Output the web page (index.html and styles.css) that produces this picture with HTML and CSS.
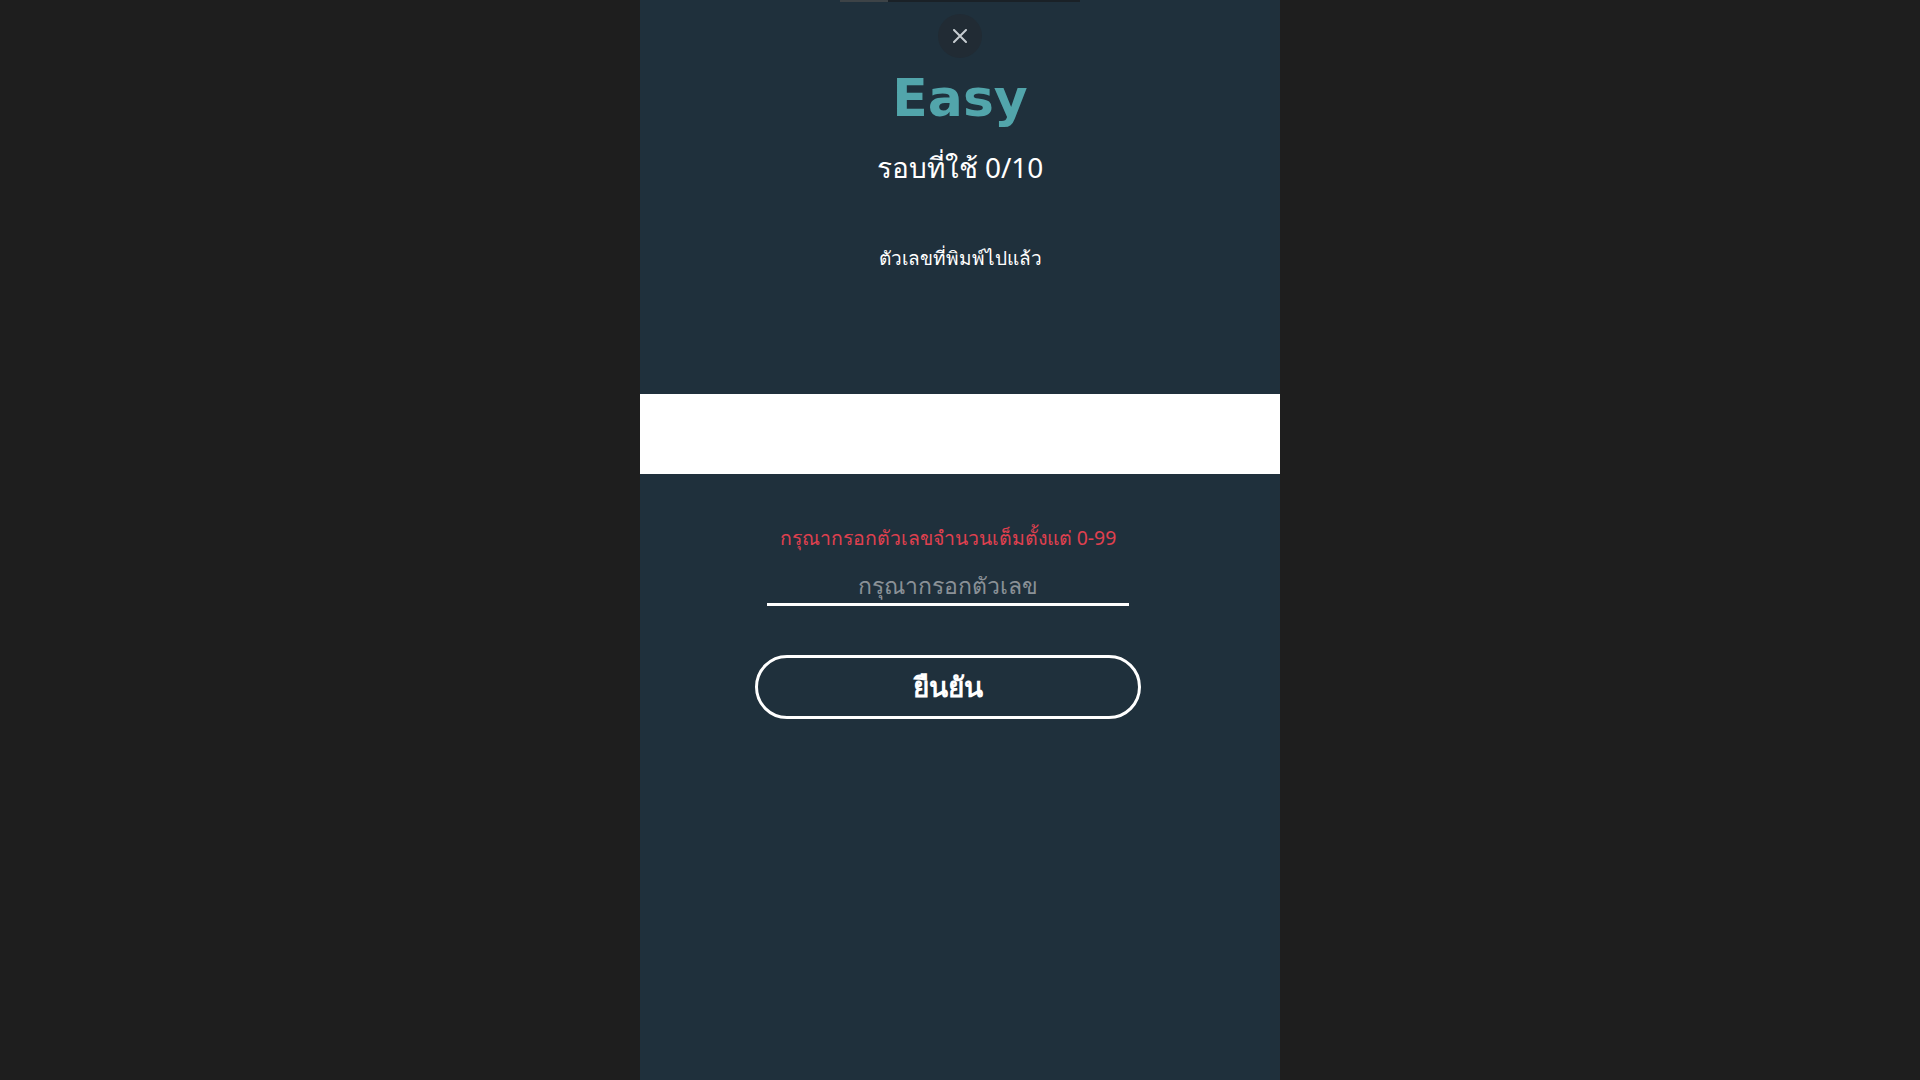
FILE: index.html
```html
<!DOCTYPE html>
<html lang="th">
<head>
<meta charset="utf-8">
<title>Easy</title>
<link rel="stylesheet" href="styles.css">
</head>
<body>
<main class="app">
  <div class="progress"><div class="progress-fill"></div></div>
  <button class="close" aria-label="close">
    <svg width="14" height="14" viewBox="0 0 14 14"><path d="M1 1L13 13M13 1L1 13" stroke="#c6ccd1" stroke-width="2" stroke-linecap="round"/></svg>
  </button>
  <h1 class="title">Easy</h1>
  <div class="rounds">รอบที่ใช้ 0/10</div>
  <div class="used-label">ตัวเลขที่พิมพ์ไปแล้ว</div>
  <div class="used-list"></div>
  <div class="band"></div>
  <form class="form">
    <div class="error">กรุณากรอกตัวเลขจำนวนเต็มตั้งแต่ 0-99</div>
    <input class="field" type="text" placeholder="กรุณากรอกตัวเลข">
    <button class="confirm" type="button">ยืนยัน</button>
  </form>
</main>
</body>
</html>
```

FILE: styles.css
```css
html, body {
  margin: 0;
  padding: 0;
  height: 100%;
}
body {
  background: #1e1e1e;
  font-family: "Noto Sans", "Liberation Sans", sans-serif;
  color: #ffffff;
}
.app {
  width: 640px;
  height: 100vh;
  margin: 0 auto;
  background: #1f303c;
  display: flex;
  flex-direction: column;
  align-items: center;
  overflow: hidden;
}
.progress {
  width: 240px;
  height: 2px;
  background: #1a2127;
  display: flex;
}
.progress-fill {
  width: 48px;
  background: #3d4347;
}
.close {
  width: 44px;
  height: 44px;
  margin-top: 12px;
  border: none;
  border-radius: 50%;
  background: #212b34;
  display: flex;
  align-items: center;
  justify-content: center;
  padding: 0;
}
.title {
  margin: 10px 0 0;
  font-family: "DejaVu Sans", "Inter", sans-serif;
  font-weight: 700;
  font-size: 52px;
  line-height: 60px;
  color: #52a5ab;
}
.rounds {
  font-size: 28px;
  line-height: 36px;
  margin-top: 21px;
}
.used-label {
  margin-top: 59px;
  font-size: 19px;
  line-height: 28px;
  font-weight: 500;
}
.used-list {
  height: 122px;
}
.band {
  align-self: stretch;
  height: 80px;
  background: #ffffff;
}
.form {
  align-self: stretch;
  padding-right: 24px;
  display: flex;
  flex-direction: column;
  align-items: center;
  padding-top: 50px;
}
.error {
  color: #e0404f;
  font-size: 19.4px;
  line-height: 28px;
}
.field {
  margin-top: 18px;
  width: 362px;
  box-sizing: border-box;
  background: transparent;
  border: none;
  border-bottom: 3px solid #ffffff;
  color: #ffffff;
  font-family: inherit;
  font-size: 23px;
  line-height: 30px;
  padding: 0 0 3px;
  text-align: center;
  outline: none;
}
.field::placeholder {
  color: #8a9197;
}
.confirm {
  margin-top: 49px;
  width: 386px;
  height: 64px;
  box-sizing: border-box;
  border: 3px solid #ffffff;
  border-radius: 32px;
  background: transparent;
  color: #ffffff;
  font-family: inherit;
  font-size: 28px;
  font-weight: 700;
}
```
